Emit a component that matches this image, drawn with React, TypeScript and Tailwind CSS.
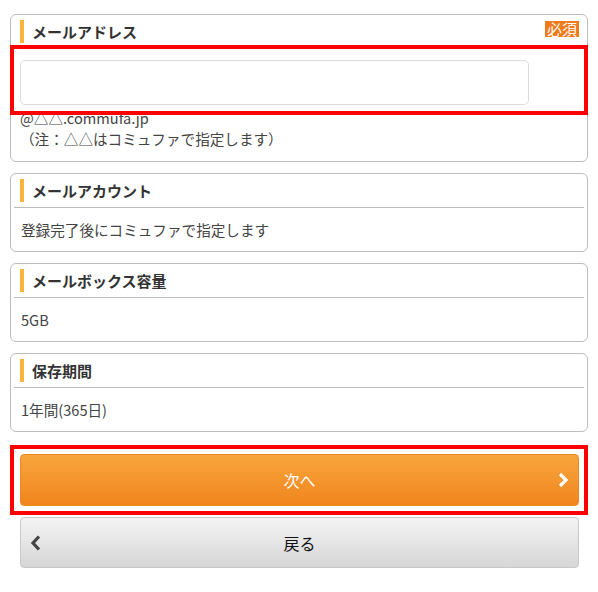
type InfoCard = {
  title: string;
  body: string;
};

const infoCards: InfoCard[] = [
  { title: "メールアカウント", body: "登録完了後にコミュファで指定します" },
  { title: "メールボックス容量", body: "5GB" },
  { title: "保存期間", body: "1年間(365日)" },
];

function CardHeader({ title, required }: { title: string; required?: boolean }) {
  return (
    <div className="mx-[3px] flex h-[34px] items-center border-b border-[#bdbdbd] pl-[6px]">
      <span className="h-[23px] w-[4px] bg-[#fab43c]" />
      <h3 className="ml-[8px] text-[15px] font-bold leading-none text-[#333]">{title}</h3>
      {required ? (
        <span className="ml-auto mr-[5px] mt-[6px] self-start bg-[#f07a1c] px-[2px] text-[15px] leading-[16px] text-white">
          必須
        </span>
      ) : null}
    </div>
  );
}

function Chevron({ dir, color }: { dir: "left" | "right"; color: string }) {
  return (
    <svg width="12" height="16" viewBox="0 0 12 16" fill="none">
      <polyline
        points={dir === "right" ? "3,2 9,8 3,14" : "9,1.5 3,8 9,14.5"}
        stroke={color}
        strokeWidth="3.2"
        strokeLinecap="butt"
        strokeLinejoin="miter"
      />
    </svg>
  );
}

export default function App() {
  return (
    <div className="min-h-[592px] bg-white px-[10px] pt-[14px] font-['Noto_Sans_CJK_JP',sans-serif] text-[#333]">
      <section className="relative rounded-[6px] border border-[#bdbdbd]">
        <CardHeader title="メールアドレス" required />
        <div className="px-[9px] pb-[12px] pt-[11px]">
          <div className="mb-[2px] h-[45px] w-[509px] rounded-[5px] border border-[#dcdcdc] bg-white" />
          <p className="text-[14.6px] leading-[21px] text-[#444]">@△△.commufa.jp</p>
          <p className="text-[14.6px] leading-[21px] text-[#444]">（注：△△はコミュファで指定します）</p>
        </div>
        <div className="absolute left-[-1px] right-[-1px] top-[30px] h-[70px] border-[4px] border-[#ff0000]" />
      </section>

      {infoCards.map((card) => (
        <section className="mt-[11px] rounded-[6px] border border-[#bdbdbd]" key={card.title}>
          <CardHeader title={card.title} />
          <p className="px-[10px] py-[11px] text-[14.6px] leading-[21px] text-[#444]">{card.body}</p>
        </section>
      ))}

      <div className="mt-[13px] border-[4px] border-[#ff0000] py-[5px] pl-[6px] pr-[5px]">
        <button className="relative flex h-[52px] w-full items-center justify-center rounded-[4px] border border-[#ea8a25] bg-gradient-to-b from-[#f7a53c] to-[#f0851b] text-[16px] text-white">
          次へ
          <span className="absolute right-[9px] top-[17px]">
            <Chevron dir="right" color="#ffffff" />
          </span>
        </button>
      </div>

      <div className="mt-[2px] pl-[10px] pr-[9px]">
        <button className="relative flex h-[51px] w-full items-center justify-center rounded-[4px] border border-[#c9c9c9] bg-gradient-to-b from-[#f4f4f4] to-[#d6d6d6] text-[16px] text-[#111]">
          戻る
          <span className="absolute left-[9px] top-[17px]">
            <Chevron dir="left" color="#444444" />
          </span>
        </button>
      </div>
    </div>
  );
}
